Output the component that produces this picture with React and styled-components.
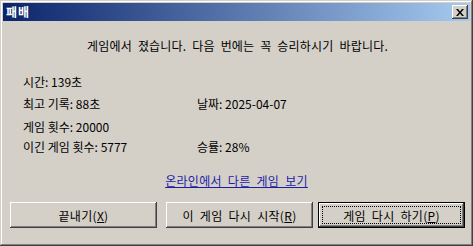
import React from "react";
import styled, { createGlobalStyle } from "styled-components";

const GlobalStyle = createGlobalStyle`
  body {
    margin: 0;
    background: #d4d0c8;
    font-family: "Noto Sans CJK KR", "Noto Sans", sans-serif;
  }
`;

const stats = [
  { left: "시간: 139초", right: "" },
  { left: "최고 기록: 88초", right: "날짜: 2025-04-07" },
  { left: "게임 횟수: 20000", right: "" },
  { left: "이긴 게임 횟수: 5777", right: "승률: 28%" },
];

const App = () => {
  return (
    <>
      <GlobalStyle />
      <Window>
        <TitleBar>
          <Title>패배</Title>
          <CloseButton aria-label="닫기">
            <svg width="8" height="7" viewBox="0 0 8 7">
              <path d="M0 0h2l2 2.5L6 0h2L5 3.5 8 7H6L4 4.5 2 7H0l3-3.5z" fill="#000" />
            </svg>
          </CloseButton>
        </TitleBar>
        <Body>
          <Message>게임에서 졌습니다. 다음 번에는 꼭 승리하시기 바랍니다.</Message>
          <Stats>
            {stats.map((row) => (
              <React.Fragment key={row.left}>
                <Stat>{row.left}</Stat>
                <Stat>{row.right}</Stat>
              </React.Fragment>
            ))}
          </Stats>
          <LinkRow>
            <Link href="#">온라인에서 다른 게임 보기</Link>
          </LinkRow>
          <Buttons>
            <Button>
              끝내기(<u>X</u>)
            </Button>
            <Button>
              이 게임 다시 시작(<u>R</u>)
            </Button>
            <Button $default>
              <Focus>
                게임 다시 하기(<u>P</u>)
              </Focus>
            </Button>
          </Buttons>
        </Body>
      </Window>
    </>
  );
};

export default App;

const Window = styled.div`
  width: 473px;
  height: 246px;
  box-sizing: border-box;
  padding: 3px;
  background: #d4d0c8;
  display: flex;
  flex-direction: column;
  box-shadow: inset -1px -1px #404040, inset 1px 1px #d4d0c8,
    inset -2px -2px #808080, inset 2px 2px #ffffff;
`;

const TitleBar = styled.div`
  height: 18px;
  display: flex;
  align-items: center;
  justify-content: space-between;
  padding: 0 2px 0 3px;
  background: linear-gradient(to right, #0a246a, #a6caf0);
`;

const Title = styled.span`
  color: #fff;
  font-size: 12px;
  font-weight: bold;
  line-height: 18px;
  letter-spacing: 1px;
`;

const CloseButton = styled.button`
  width: 16px;
  height: 14px;
  padding: 0;
  border: none;
  background: #d4d0c8;
  display: flex;
  align-items: center;
  justify-content: center;
  box-shadow: inset -1px -1px #404040, inset 1px 1px #ffffff,
    inset -2px -2px #808080, inset 2px 2px #d4d0c8;
`;

const Body = styled.div`
  flex: 1;
  display: flex;
  flex-direction: column;
  padding-top: 17px;
  font-size: 12px;
  color: #000;
`;

const Message = styled.div`
  text-align: center;
  line-height: 16px;
  padding-left: 2px;
  word-spacing: 3px;
  letter-spacing: 0.2px;
`;

const Stats = styled.div`
  display: grid;
  grid-template-columns: 174px 1fr;
  grid-template-rows: 22px 23px 20px 20px;
  margin-top: 20px;
  padding-left: 20px;
`;

const Stat = styled.div`
  line-height: 16px;
`;

const LinkRow = styled.div`
  text-align: center;
  margin-top: 14px;
  line-height: 16px;
  word-spacing: 3px;
  letter-spacing: 0.3px;
`;

const Link = styled.a`
  color: #1c1caa;
  text-decoration: underline;
`;

const Buttons = styled.div`
  display: flex;
  margin-top: 13px;
  padding-left: 7px;
  gap: 9px;

  & > :last-child {
    margin-left: -4px;
  }
`;

const Button = styled.button`
  width: 147px;
  height: 26px;
  padding: 0;
  border: ${(p) => (p.$default ? "1px solid #000" : "none")};
  background: #d4d0c8;
  font-family: inherit;
  font-size: 12px;
  color: #000;
  word-spacing: 3px;
  letter-spacing: 0.3px;
  display: flex;
  align-items: center;
  justify-content: center;
  box-shadow: inset -1px -1px #404040, inset 1px 1px #ffffff,
    inset -2px -2px #808080, inset 2px 2px #d4d0c8;

  u {
    text-decoration: underline;
  }
`;

const Focus = styled.span`
  flex: 1;
  align-self: stretch;
  margin: 3px;
  border: 1px dotted #000;
  display: flex;
  align-items: center;
  justify-content: center;
`;
